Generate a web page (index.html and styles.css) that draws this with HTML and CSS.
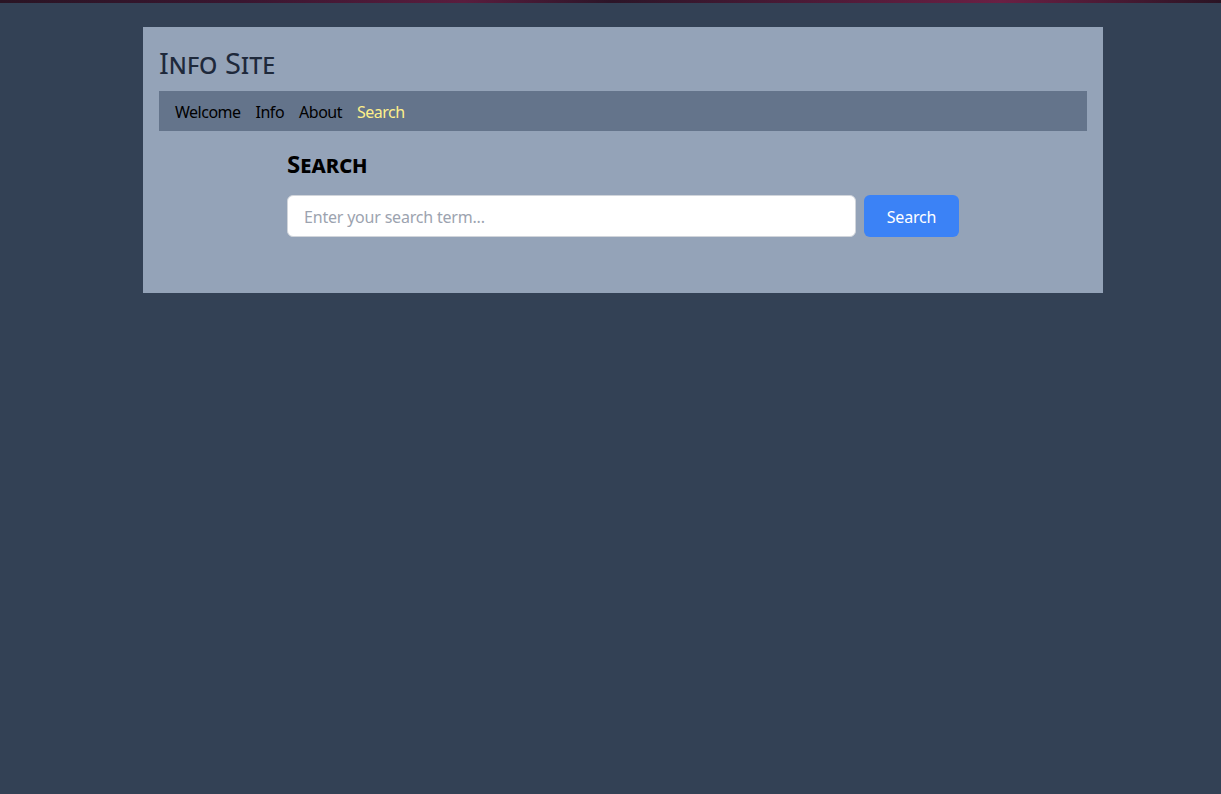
FILE: index.html
```html
<!DOCTYPE html>
<html lang="en">
<head>
<meta charset="utf-8">
<title>Info Site - Search</title>
<link rel="stylesheet" href="styles.css">
</head>
<body>
<div class="topstrip"></div>
<div class="wrap">
  <div class="page">
    <header class="site-header">
      <h1 class="site-title">Info Site</h1>
      <nav class="nav">
        <a href="#" class="nav-link">Welcome</a>
        <a href="#" class="nav-link">Info</a>
        <a href="#" class="nav-link">About</a>
        <a href="#" class="nav-link active">Search</a>
      </nav>
    </header>
    <main class="content">
      <h2 class="section-title">Search</h2>
      <form class="search-form">
        <input class="search-input" type="text" placeholder="Enter your search term...">
        <button class="search-button" type="button">Search</button>
      </form>
    </main>
  </div>
</div>
</body>
</html>
```
FILE: styles.css
```css
html, body {
  margin: 0;
  padding: 0;
  background: #334155;
  font-family: "Noto Sans", "Open Sans", sans-serif;
}
.topstrip {
  height: 3px;
  background: linear-gradient(90deg, #2a1424 0%, #3a1630 20%, #5a1d3e 38%, #2c1528 50%, #4a1a36 65%, #6a2044 82%, #2a1424 100%);
}
.wrap {
  padding-left: 25px;
}
.page {
  width: 960px;
  margin: 24px auto 0;
  background: #94a3b8;
  padding: 16px 16px 56px;
  box-sizing: border-box;
}
.site-title {
  margin: 0;
  font-size: 29px;
  font-weight: 400;
  font-variant: small-caps;
  color: #1e293b;
  line-height: 40px;
}
.nav {
  display: flex;
  gap: 15px;
  align-items: center;
  height: 40px;
  margin-top: 8px;
  padding: 0 16px;
  background: #64748b;
}
.nav-link {
  color: #000;
  text-decoration: none;
  font-size: 16px;
  letter-spacing: -0.5px;
  line-height: 22px;
  padding-top: 2px;
}
.nav-link.active {
  color: #fef08a;
}
.content {
  max-width: 672px;
  margin: 0 auto;
  padding-top: 18px;
}
.section-title {
  margin: 0 0 16px;
  font-size: 24px;
  font-weight: 700;
  font-variant: small-caps;
  line-height: 30px;
  color: #000;
}
.search-form {
  display: flex;
  gap: 8px;
}
.search-input {
  flex: 1;
  height: 42px;
  box-sizing: border-box;
  border: 1px solid #d1d5db;
  border-radius: 6px;
  padding: 2px 16px 0;
  font-family: inherit;
  font-size: 16px;
  background: #fff;
  color: #111;
  letter-spacing: -0.2px;
}
.search-input::placeholder {
  color: #9ca3af;
}
.search-button {
  width: 95px;
  height: 42px;
  border: none;
  border-radius: 6px;
  background: #3b82f6;
  color: #fff;
  font-family: inherit;
  font-size: 16px;
  padding-top: 2px;
  letter-spacing: -0.2px;
}
```
